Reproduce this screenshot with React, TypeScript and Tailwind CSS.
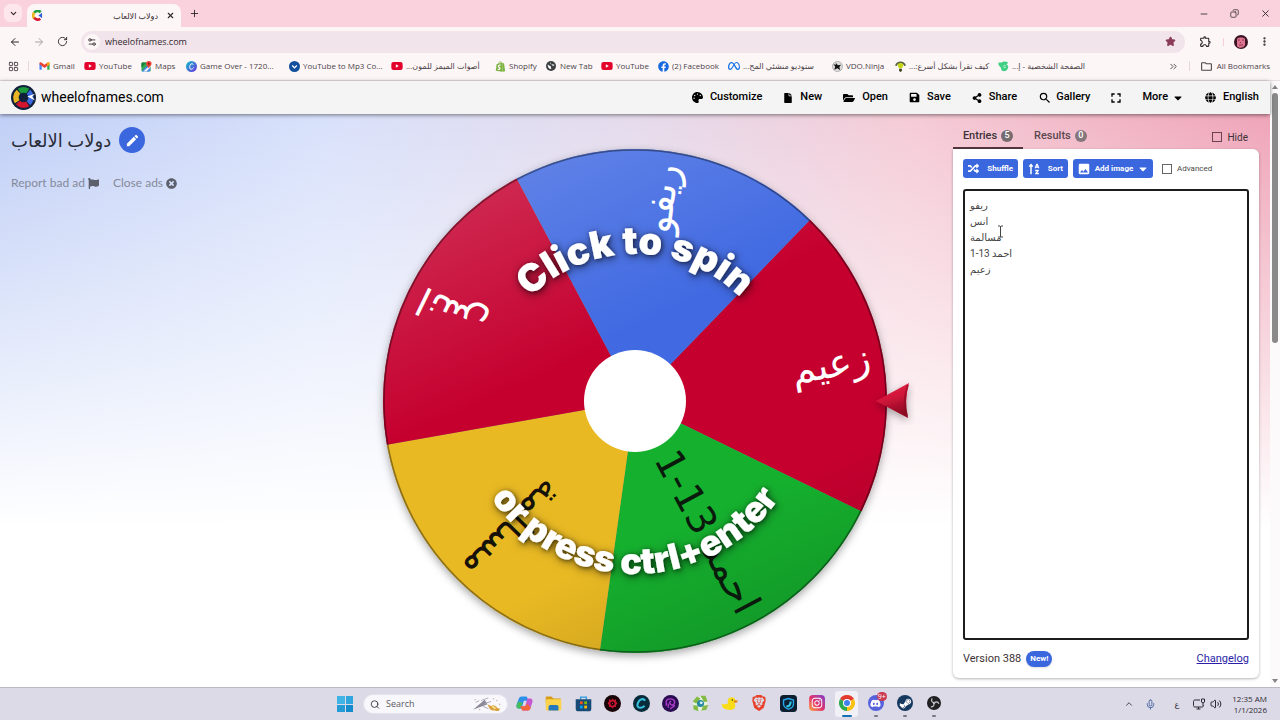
import React from 'react';
import {
  FaCaretDown, FaDiscord, FaFacebook, FaFile, FaFlag, FaFolderOpen, FaGlobe, FaInstagram, FaPalette,
  FaRandom, FaSave, FaShareAlt, FaShopify, FaSortAlphaUp, FaSteamSymbol, FaTimesCircle, FaYoutube,
} from 'react-icons/fa';
import { FaMeta } from 'react-icons/fa6';
import { MdEdit, MdFullscreen, MdImage, MdOutlineExtension, MdOutlineFolder, MdSearch } from 'react-icons/md';
import { SiBrave } from 'react-icons/si';
import {
  ArrowLeft, ArrowRight, ChevronDown, ChevronUp, ChevronsRight, Copy, EllipsisVertical, LayoutGrid,
  Mic, Minus, Plus, RotateCw, Search, Settings2, Star, Volume2, X,
} from 'lucide-react';

interface Bookmark {
  label: string;
  icon: React.ReactNode;
  width: string;
  rtl?: boolean;
}

interface Slice {
  label: string;
  start: number;
  fill: string;
  ink: string;
}

const YouTubeIcon = () => <FaYoutube className="size-3 text-[#e3002b]" />;

const GmailIcon = () => (
  <svg viewBox="0 0 24 18" className="w-[11px]">
    <path d="M1 17V3l5 4v10z" fill="#4285f4" />
    <path d="M18 17V7l5-4v14z" fill="#34a853" />
    <path d="M1 3c0-3 3-3 4-2l7 5 7-5c1-1 4-1 4 2v2l-11 8L1 5z" fill="#ea4335" />
    <path d="M18 2l1-1c1-1 4-1 4 2v2l-5 4z" fill="#fbbc04" />
  </svg>
);

const MapsIcon = () => (
  <svg viewBox="0 0 24 24" className="size-[11px]">
    <rect x="1" y="3" width="20" height="20" rx="3" fill="#34a853" />
    <path d="M2 22L20 4v17l-2 2H3z" fill="#4285f4" />
    <path d="M5 23L21 8v5l-9 10z" fill="#f4f4f4" />
    <path d="M1 6c0-2 1-3 3-3h8L1 14z" fill="#188038" />
    <path d="M17 0a6 6 0 0 1 6 6c0 4-4 5-6 10-2-5-6-6-6-10a6 6 0 0 1 6-6z" fill="#ea4335" />
    <circle cx="17" cy="6" r="2" fill="#811411" />
  </svg>
);

const CanvaIcon = () => (
  <svg viewBox="0 0 24 24" className="size-[11px]">
    <defs>
      <linearGradient id="canva" x1="0" y1="0" x2="1" y2="1">
        <stop offset="0" stopColor="#12c2c9" />
        <stop offset="1" stopColor="#6a2fe0" />
      </linearGradient>
    </defs>
    <circle cx="12" cy="12" r="12" fill="url(#canva)" />
    <path d="M16 8c-1-3-5-3-7 1s-1 9 2 9 5-2 6-4" fill="none" stroke="#fff" strokeWidth="2" />
  </svg>
);

const ConverterIcon = () => (
  <svg viewBox="0 0 24 24" className="size-[11px]">
    <circle cx="12" cy="12" r="12" fill="#11509c" />
    <path d="M7 10l5 5 5-5" fill="none" stroke="#fff" strokeWidth="3" />
  </svg>
);

const GlobeTabIcon = () => (
  <svg viewBox="0 0 24 24" className="size-[10px]">
    <circle cx="12" cy="12" r="12" fill="#3c4043" />
    <path d="M4 9c3-1 3 3 6 3s1 5 3 7c-5 1-9-4-9-10zM11 3c2 3 0 4 3 5s6-1 6 2c-2 3-5 1-6-1s-5-1-3-6z" fill="#fff" />
  </svg>
);

const NinjaIcon = () => (
  <svg viewBox="0 0 24 24" className="size-[11px]">
    <circle cx="12" cy="12" r="11" fill="#ddd" stroke="#777" />
    <path d="M8 4l5 5 7-1-4 5 2 7-6-4-7 3 2-7-4-5 6 1z" fill="#111" />
  </svg>
);

const ReaderIcon = () => (
  <svg viewBox="0 0 24 24" className="size-[11px]">
    <path d="M0 10C3-2 21-2 24 10l-4 1C18 3 6 3 4 11z" fill="#58633a" />
    <path d="M6 8c2-4 10-4 12 0 0 4-2 5-3 8H9C8 13 6 12 6 8z" fill="#c5d60f" />
    <path d="M9 17h6v5l-3 2-3-2z" fill="#3c4322" />
  </svg>
);

const LeafIcon = () => (
  <svg viewBox="0 0 24 24" className="size-[11px]">
    <path d="M1 4c4-2 5 1 9-2 4-2 8-1 12 1-1 3-3 3-3 5 3 1 4 4 3 7-2 5-6 8-11 7-5-1-3-6-6-9C3 11 0 9 1 4z" fill="#3fcf83" />
    <path d="M17 10c-4-2-6 1-5 3s4 3 5 0h-3" fill="none" stroke="#fff" strokeWidth="1" />
  </svg>
);

const bookmarks: Bookmark[] = [
  { label: 'Gmail', icon: <GmailIcon />, width: 'w-[46px]' },
  { label: 'YouTube', icon: <YouTubeIcon />, width: 'w-[56px]' },
  { label: 'Maps', icon: <MapsIcon />, width: 'w-[45px]' },
  { label: 'Game Over - 1720...', icon: <CanvaIcon />, width: 'w-[103px]' },
  { label: 'YouTube to Mp3 Co...', icon: <ConverterIcon />, width: 'w-[103px]' },
  { label: 'أصوات الميمز للمون...', icon: <YouTubeIcon />, width: 'w-[103px]', rtl: true },
  { label: 'Shopify', icon: <FaShopify className="size-[11px] text-[#7db343]" />, width: 'w-[51px]' },
  { label: 'New Tab', icon: <GlobeTabIcon />, width: 'w-[56px]' },
  { label: 'YouTube', icon: <YouTubeIcon />, width: 'w-[56px]' },
  { label: '(2) Facebook', icon: <FaFacebook className="size-[11px] text-[#1769e0]" />, width: 'w-[71px]' },
  { label: 'ستوديو منشئي المح...', icon: <FaMeta className="size-3 text-[#1474e8]" />, width: 'w-[103px]', rtl: true },
  { label: 'VDO.Ninja', icon: <NinjaIcon />, width: 'w-[63px]' },
  { label: 'كيف تقرأ بشكل أسرع:...', icon: <ReaderIcon />, width: 'w-[103px]', rtl: true },
  { label: 'الصفحة الشخصية - إ...', icon: <LeafIcon />, width: 'w-[103px]', rtl: true },
];

const entries = ['ريفو', 'انس', 'مسالمة', 'احمد 13-1', 'زعيم'];

const slices: Slice[] = [
  { label: 'زعيم', start: -46, fill: '#c5002f', ink: '#fff' },
  { label: 'احمد 13-1', start: 26, fill: '#15b02e', ink: '#0a1a0c' },
  { label: 'مسالمة', start: 98, fill: '#e9b923', ink: '#16120a' },
  { label: 'انس', start: 170, fill: '#c5002f', ink: '#fff' },
  { label: 'ريفو', start: 242, fill: '#4069e2', ink: '#fff' },
];

const RADIUS = 252;

const slicePath = (start: number) => {
  const point = (deg: number) => {
    const rad = (deg * Math.PI) / 180;
    return `${(RADIUS * Math.cos(rad)).toFixed(1)} ${(RADIUS * Math.sin(rad)).toFixed(1)}`;
  };
  return `M0 0L${point(start)}A${RADIUS} ${RADIUS} 0 0 1 ${point(start + 72)}Z`;
};

const SiteLogo: React.FC<{ className?: string }> = ({ className }) => (
  <svg viewBox="-13 -13 26 26" className={className}>
    <circle r="13" fill="#10203a" />
    <path d="M0 0L-6 -9A11 11 0 0 1 6 -9Z" fill="#1c9b3c" />
    <path d="M0 0L-9 6A11 11 0 0 1 -7 -8Z" fill="#e8b622" />
    <path d="M0 0L6 9A11 11 0 0 1 -8 7Z" fill="#d31530" />
    <path d="M0 0L7 -8A11 11 0 0 1 7 8Z" fill="#3a68dd" />
    <circle r="5" fill="#10203a" />
    <path d="M4 -1L12 -4L9 -1L12 3Z" fill="#fff" />
  </svg>
);

const TabStrip = () => (
  <div className="flex h-[27px] items-end bg-[#fad2dd]">
    <button aria-label="Search tabs" className="mb-[5px] ml-1 flex size-[18px] items-center justify-center rounded-md bg-[#fde6ec]">
      <ChevronDown className="size-[9px]" strokeWidth={3} />
    </button>
    <div className="ml-[5px] flex h-[23px] w-[154px] items-center rounded-t-lg bg-[#fdf6f7] pl-1 pr-[2px]">
      <svg viewBox="-12 -12 24 24" className="ml-px size-[11px]">
        <path d="M7 -7A9 9 0 0 0 -7 -6" fill="none" stroke="#22a142" strokeWidth="6" />
        <path d="M-7 -6A9 9 0 0 0 -7 6" fill="none" stroke="#eab71f" strokeWidth="6" />
        <path d="M-7 5A9 9 0 0 0 6 7" fill="none" stroke="#d61b30" strokeWidth="6" />
        <path d="M2 0L10 -6V6Z" fill="#2f61d6" />
      </svg>
      <span dir="rtl" className="flex-1 px-1 text-[8px]">دولاب الالعاب</span>
      <button aria-label="Close tab" className="p-1"><X className="size-[9px]" strokeWidth={3} /></button>
    </div>
    <button aria-label="New tab" className="mb-2 ml-2"><Plus className="size-[11px]" /></button>
    <div className="mb-2 ml-auto mr-[9px] flex items-center gap-[21px]">
      <button aria-label="Minimize"><Minus className="size-[10px]" /></button>
      <button aria-label="Restore"><Copy className="size-[9px] -scale-x-100" /></button>
      <button aria-label="Close"><X className="size-[11px]" /></button>
    </div>
  </div>
);

const AddressBar = () => (
  <div className="flex h-[29px] items-center bg-[#fdf6f7] pl-[9px] pr-[10px]">
    <button aria-label="Back"><ArrowLeft className="size-3" /></button>
    <button aria-label="Forward" className="ml-3 text-[#aaa1a5]"><ArrowRight className="size-3" /></button>
    <button aria-label="Reload" className="ml-3"><RotateCw className="size-[11px]" /></button>
    <div className="ml-[13px] flex h-[22px] flex-1 items-center rounded-full bg-[#f1e4ea] pl-[3px] pr-[9px]">
      <button aria-label="Site information" className="flex size-4 items-center justify-center rounded-full bg-[#fdf6f7]">
        <Settings2 className="size-[10px]" />
      </button>
      <input aria-label="Address" defaultValue="wheelofnames.com" className="ml-[5px] flex-1 bg-transparent text-[9px] text-[#33292e] outline-none" />
      <button aria-label="Edit bookmark"><Star className="size-[11px] fill-[#893b57] text-[#893b57]" /></button>
    </div>
    <button aria-label="Extensions" className="ml-[14px]"><MdOutlineExtension className="size-[13px]" /></button>
    <span className="ml-[11px] h-2 w-px bg-[#f3cfda]" />
    <button aria-label="Profile" className="ml-[10px]">
      <svg viewBox="0 0 14 14" className="size-[14px]">
        <circle cx="7" cy="7" r="7" fill="#3c1322" />
        <path d="M3 4c1-2 7-2 8 0v6c-1 3-6 4-8 1z" fill="#dd7490" />
        <path d="M4 5h2M8 5h2M6 8l1-1M5 10h4" stroke="#8b3450" />
      </svg>
    </button>
    <button aria-label="Menu" className="ml-[11px]"><EllipsisVertical className="size-[11px]" strokeWidth={3} /></button>
  </div>
);

const BookmarkBar = () => (
  <nav className="flex h-[25px] items-center border-b border-[#e9e0e3] bg-[#fdf6f7] pb-1 pl-2 pr-[10px] text-[8px] text-[#4b4347]">
    <button aria-label="Apps"><LayoutGrid className="size-[11px]" /></button>
    <span className="ml-[9px] mr-[9px] h-[10px] w-px bg-[#e6d7dc]" />
    {bookmarks.map((bookmark, i) => (
      <a key={i} href="#" className={`${bookmark.width} flex shrink-0 items-center gap-[3px] whitespace-nowrap`}>
        <span className="flex w-3 shrink-0 justify-center">{bookmark.icon}</span>
        <span dir={bookmark.rtl ? 'rtl' : 'ltr'}>{bookmark.label}</span>
      </a>
    ))}
    <button aria-label="More bookmarks" className="ml-auto"><ChevronsRight className="size-[11px]" /></button>
    <span className="ml-[10px] mr-[10px] h-[10px] w-px bg-[#e6d7dc]" />
    <a href="#" className="flex items-center gap-1 whitespace-nowrap">
      <MdOutlineFolder className="size-[13px]" />
      All Bookmarks
    </a>
  </nav>
);

const SiteHeader = () => (
  <header className="relative flex h-[33px] items-center justify-between bg-[#f4f4f4] px-[11px] text-black shadow-[0_1px_4px_rgba(0,0,0,0.5)]">
    <a href="#" className="flex items-center gap-[5px] text-[14px]">
      <SiteLogo className="size-[25px]" />
      wheelofnames.com
    </a>
    <nav className="flex items-center gap-[21px] text-[11px] font-medium">
      <button className="flex items-center gap-[7px]"><FaPalette className="size-[11px]" />Customize</button>
      <button className="flex items-center gap-[7px]"><FaFile className="size-[10px]" />New</button>
      <button className="flex items-center gap-[7px]"><FaFolderOpen className="size-3" />Open</button>
      <button className="flex items-center gap-[7px]"><FaSave className="size-[11px]" />Save</button>
      <button className="flex items-center gap-[7px]"><FaShareAlt className="size-[10px]" />Share</button>
      <button className="flex items-center gap-1"><MdSearch className="size-[14px]" />Gallery</button>
      <button aria-label="Fullscreen"><MdFullscreen className="-mx-[3px] size-4" /></button>
      <button className="flex items-center gap-1">More<FaCaretDown className="size-3" /></button>
      <button className="flex items-center gap-[7px]"><FaGlobe className="size-[11px]" />English</button>
    </nav>
  </header>
);

const TitleBlock = () => (
  <section className="pl-[11px]">
    <div className="flex h-[26px] items-center gap-2">
      <h1 dir="rtl" className="text-[18px] text-[#2a2d38]">دولاب الالعاب</h1>
      <button aria-label="Edit title" className="flex size-[26px] items-center justify-center rounded-full bg-[#3a66de] text-white">
        <MdEdit className="size-[15px]" />
      </button>
    </div>
    <div className="mt-[21px] flex items-center gap-[14px] font-['Lato'] text-[12px] text-[#858a9b]">
      <button className="flex items-center gap-[3px]">Report bad ad<FaFlag className="size-[11px] text-[#5c606c]" /></button>
      <button className="flex items-center gap-[3px]">Close ads<FaTimesCircle className="size-[11px] text-[#5c606c]" /></button>
    </div>
  </section>
);

const Wheel = () => (
  <button aria-label="Spin the wheel" className="block">
    <svg viewBox="-280 -271 560 540" className="w-[560px] font-['DejaVu_Sans',sans-serif]">
      <defs>
        <linearGradient id="shine" x1="0.250" y1="0" x2="0.700" y2="1">
          <stop offset="0" stopColor="#fff" stopOpacity="0.180" />
          <stop offset="0.400" stopColor="#fff" stopOpacity="0" />
          <stop offset="0.750" stopColor="#000" stopOpacity="0" />
          <stop offset="1" stopColor="#000" stopOpacity="0.140" />
        </linearGradient>
        <linearGradient id="pointer" x1="0" y1="0" x2="0.300" y2="1">
          <stop offset="0" stopColor="#e02545" />
          <stop offset="0.500" stopColor="#d3173b" />
          <stop offset="1" stopColor="#8f0822" />
        </linearGradient>
        <filter id="drop" x="-20%" y="-20%" width="140%" height="140%">
          <feDropShadow dx="0" dy="3" stdDeviation="4" floodOpacity="0.350" />
        </filter>
        <filter id="glow" x="-20%" y="-40%" width="140%" height="180%">
          <feDropShadow dx="1" dy="1" stdDeviation="2" floodOpacity="0.500" />
          <feDropShadow dx="1" dy="2" stdDeviation="5" floodOpacity="0.500" />
        </filter>
        <path id="upper-arc" d="M-149 2A149 149 0 0 1 149 2" />
        <path id="lower-arc" d="M-175 -2A175 175 0 0 0 175 -2" />
      </defs>
      <circle r={RADIUS} fill="#888" filter="url(#drop)" />
      {slices.map((slice) => (
        <path key={slice.label} d={slicePath(slice.start)} fill={slice.fill} />
      ))}
      <circle r={RADIUS} fill="url(#shine)" />
      <circle r={RADIUS - 1} fill="none" stroke="#000" strokeOpacity="0.400" strokeWidth="1.500" />
      {slices.map((slice) => (
        <text
          key={slice.label}
          transform={`rotate(${slice.start + 36})`}
          x="239"
          y="11"
          textAnchor="end"
          fontSize="39"
          fill={slice.ink}
        >
          {slice.label}
        </text>
      ))}
      <circle r="51" fill="#fff" />
      <g filter="url(#glow)" fill="#fff" className="font-['Inter'] font-black">
        <text fontSize="38" textAnchor="middle">
          <textPath href="#upper-arc" startOffset="50%">Click to spin</textPath>
        </text>
        <text fontSize="36" textAnchor="middle">
          <textPath href="#lower-arc" startOffset="50%">or press ctrl+enter</textPath>
        </text>
      </g>
      <g filter="url(#drop)">
        <path d="M241 0L274 -18Q269 0 273 17Z" fill="url(#pointer)" />
        <path d="M273 -16Q267 0 272 15" fill="none" stroke="#7d0a20" strokeOpacity="0.500" strokeWidth="2" />
      </g>
    </svg>
  </button>
);

const EntriesPanel = () => (
  <aside className="mr-[11px] flex w-[306px] flex-col justify-self-end pt-[10px] text-[11px] text-[#3d3237]">
    <div className="flex h-[25px] items-stretch pt-px font-medium">
      <button className="flex w-[70px] items-center justify-center gap-1 border-b-2 border-[#55363f]">
        Entries
        <span className="flex size-3 items-center justify-center rounded-full bg-[#766b6f] text-[9px] text-white">5</span>
      </button>
      <button className="ml-[11px] flex items-center gap-1 border-b-2 border-transparent text-[#5b4850]">
        Results
        <span className="flex size-3 items-center justify-center rounded-full bg-[#85777c] text-[9px] text-white">0</span>
      </button>
      <label className="ml-auto mr-[11px] flex items-center gap-[5px] text-[10px] font-normal">
        <input type="checkbox" className="size-[10px] appearance-none border border-[#6b4450]" />
        Hide
      </label>
    </div>
    <div className="flex flex-1 flex-col rounded-md rounded-tl-none bg-white px-[10px] pt-[10px] shadow-[0_1px_3px_rgba(0,0,0,0.3)]">
      <div className="flex h-[19px] items-stretch gap-[5px] text-[8px] font-bold text-white">
        <button className="flex w-[55px] items-center justify-between rounded-[3px] bg-[#3a66de] px-[5px]">
          <FaRandom className="size-[11px]" />Shuffle
        </button>
        <button className="flex w-[45px] items-center justify-between rounded-[3px] bg-[#3a66de] px-[5px]">
          <FaSortAlphaUp className="size-3" />Sort
        </button>
        <button className="flex w-[80px] items-center justify-between rounded-[3px] bg-[#3a66de] px-1">
          <MdImage className="size-[14px]" />Add image<FaCaretDown className="size-3" />
        </button>
        <label className="ml-1 flex items-center gap-[5px] font-normal text-[#4a4a4a]">
          <input type="checkbox" className="size-[10px] appearance-none border border-[#666]" />
          Advanced
        </label>
      </div>
      <div className="relative mt-[11px] flex flex-1">
        <textarea
          dir="ltr"
          aria-label="Entries"
          defaultValue={entries.join('\n')}
          className="w-full resize-none rounded-[3px] border-2 border-[#1c1c1c] px-[5px] py-[7px] font-['Roboto','DejaVu_Sans',sans-serif] text-[10px] leading-4 text-[#454545] outline-none"
        />
        {/* text cursor hovering the list */}
        <svg viewBox="0 0 7 13" className="absolute left-[34px] top-9 h-[13px] w-[7px]">
          <path d="M1 1h2l.5.5L4 1h2M3.500 1v11M1 12h5" fill="none" stroke="#444" />
        </svg>
      </div>
      <div className="flex h-[38px] items-center">
        <span>Version 388</span>
        <span className="ml-[5px] flex h-4 w-[26px] items-center justify-center rounded-full bg-[#3a66de] text-[8px] font-bold text-white shadow">New!</span>
        <a href="#" className="ml-auto text-[#2b1fa8] underline">Changelog</a>
      </div>
    </div>
  </aside>
);

const Scrollbar = () => (
  <div className="flex w-[10px] flex-col items-center bg-[#fcfafa] py-1">
    <svg viewBox="0 0 6 4" className="w-[6px]"><path d="M0 4L3 0l3 4z" fill="#858585" /></svg>
    <div className="mt-1 h-[250px] w-[6px] rounded-full bg-[#8a8a8a]" />
    <svg viewBox="0 0 6 4" className="mt-auto w-[6px]"><path d="M0 0l3 4 3-4z" fill="#858585" /></svg>
  </div>
);

const CopilotIcon = () => (
  <svg viewBox="0 0 24 24" className="size-[17px]">
    <path d="M8 2h7l3 6h-7L8 19H4c-3 0-4-3-3-6L4 5c1-2 2-3 4-3z" fill="#2d8fe8" />
    <path d="M1 14l2-5 6 2-2 8H4c-3 0-4-2-3-5z" fill="#42bd5b" />
    <path d="M16 22H9l-3-6h7l3-11h4c3 0 4 3 3 6l-3 8c-1 2-2 3-4 3z" fill="#c557cf" />
    <path d="M16 22H9l-3-6h7l3-4 5 6c-1 3-3 4-5 4z" fill="#f5663d" />
  </svg>
);

const ExplorerIcon = () => (
  <svg viewBox="0 0 24 22" className="size-[17px]">
    <path d="M1 3c0-2 1-2 2-2h6l3 3h10v6H1z" fill="#d99b14" />
    <rect x="1" y="5" width="22" height="16" rx="2" fill="#fcd34a" />
    <path d="M5 21v-5c0-2 1-3 3-3h8c2 0 3 1 3 3v5z" fill="#2577be" />
  </svg>
);

const StoreIcon = () => (
  <svg viewBox="0 0 24 24" className="size-[17px]">
    <path d="M8 6V3h8v3" fill="none" stroke="#2b9be0" strokeWidth="2" />
    <path d="M1 6h22v13c0 3-1 4-4 4H5c-3 0-4-1-4-4z" fill="#184a77" />
    <path d="M7 9h4v4H7z" fill="#f25022" />
    <path d="M13 9h4v4h-4z" fill="#7fba00" />
    <path d="M7 15h4v4H7z" fill="#00a4ef" />
    <path d="M13 15h4v4h-4z" fill="#ffb900" />
  </svg>
);

const RedAppIcon = () => (
  <svg viewBox="-12 -12 24 24" className="size-[17px]">
    <circle r="12" fill="#170508" />
    <path d="M0 -7l2 2 3-1 0 3 2 3-2 2 0 3-3 0-2 2-2-2-3 0 0-3-2-2 2-3 0-3 3 1z" fill="#c41530" />
    <circle r="2" fill="none" stroke="#170508" strokeWidth="2" />
  </svg>
);

const CyanAppIcon = () => (
  <svg viewBox="-12 -12 24 24" className="size-[17px]">
    <circle r="12" fill="#082b3a" />
    <path d="M5 -4C3 -8 -3 -6 -5 -1s0 7 3 7 5-1 6-3" fill="none" stroke="#35bfdc" strokeWidth="3" />
  </svg>
);

const PurpleAppIcon = () => (
  <svg viewBox="-12 -12 24 24" className="size-[17px]">
    <circle r="12" fill="#2a0d51" />
    <path d="M-6 3v-5c0-6 11-6 12 0 0 4-4 5-6 3s-1-4 1-4M-3 6v-6M0 8c0-3 5-2 6-6" fill="none" stroke="#ae3acb" strokeWidth="2" />
  </svg>
);

const GreenAppIcon = () => (
  <svg viewBox="-12 -12 24 24" className="size-[17px]">
    <circle r="10" fill="#e7f2df" />
    <path d="M-11 -3l6-7 5 3-6 7zM0 -11h7l3 8-5 1zM11 2l-3 7-7 1 3-7zM-3 11l-7-3v-6l6 1z" fill="#82ba44" />
    <circle r="5" fill="#2788a1" />
    <circle cx="1" cy="-1" r="2" fill="#d5f1f3" />
  </svg>
);

const DuckIcon = () => (
  <svg viewBox="0 0 24 24" className="size-[17px]">
    <path d="M1 12c3 2 6 1 9 0-1-3-1-9 5-9 5 0 7 5 4 9 3 5 0 9-6 9C5 21 1 18 1 12z" fill="#f8dc19" />
    <path d="M19 7l5 1-2 3h-4z" fill="#e98517" />
    <circle cx="16" cy="7" r="1" fill="#222" />
  </svg>
);

const ShieldIcon = () => (
  <svg viewBox="0 0 24 24" className="size-[17px]">
    <rect width="24" height="24" rx="5" fill="#0d1e30" />
    <path d="M5 7l7-2 7 2v6c0 4-4 6-7 7-3-1-7-4-7-7z" fill="none" stroke="#26a7ea" strokeWidth="2" />
    <path d="M9 16c4 0 6-2 6-7" fill="none" stroke="#35c9ef" strokeWidth="3" />
  </svg>
);

const ChromeIcon = () => (
  <svg viewBox="-12 -12 24 24" className="size-4">
    <path d="M0 0L-10.400 -6A12 12 0 0 1 10.400 -6Z" fill="#e33b2e" />
    <path d="M0 0L10.400 -6A12 12 0 0 1 0 12Z" fill="#fbc116" />
    <path d="M0 0L0 12A12 12 0 0 1 -10.400 -6Z" fill="#2da94f" />
    <circle r="6" fill="#fff" />
    <circle r="4.500" fill="#4080ee" />
  </svg>
);

const ObsIcon = () => (
  <svg viewBox="-12 -12 24 24" className="size-[14px]">
    <circle r="12" fill="#201f22" />
    <g fill="none" stroke="#c9c8cc" strokeWidth="2">
      <path d="M-3 -8C-6 -4 -3 0 1 -1" />
      <path d="M-3 -8C-6 -4 -3 0 1 -1" transform="rotate(120)" />
      <path d="M-3 -8C-6 -4 -3 0 1 -1" transform="rotate(240)" />
    </g>
  </svg>
);

const taskbarApps = [
  { name: 'Copilot', icon: <CopilotIcon /> },
  { name: 'File Explorer', icon: <ExplorerIcon /> },
  { name: 'Store', icon: <StoreIcon /> },
  { name: 'Game launcher', icon: <RedAppIcon /> },
  { name: 'Clips', icon: <CyanAppIcon /> },
  { name: 'Voice', icon: <PurpleAppIcon /> },
  { name: 'Emulator', icon: <GreenAppIcon /> },
  { name: 'Duck', icon: <DuckIcon /> },
  { name: 'Brave', icon: <SiBrave className="size-4 text-[#e8432a]" /> },
  { name: 'Shield', icon: <ShieldIcon /> },
  {
    name: 'Instagram',
    icon: (
      <span className="flex size-4 items-center justify-center rounded-[4px] bg-linear-to-tr from-[#f9a63a] via-[#df2b70] to-[#8034c9] text-white">
        <FaInstagram className="size-3" />
      </span>
    ),
  },
  { name: 'Chrome', icon: <ChromeIcon />, active: true },
  {
    name: 'Discord',
    icon: (
      <span className="relative flex size-4 items-center justify-center rounded-full bg-[#5662dc] text-white">
        <FaDiscord className="size-[11px]" />
        <span className="absolute -right-[3px] -top-[3px] flex h-[9px] w-[10px] items-center justify-center rounded-full bg-[#ca3b52] text-[7px] leading-none">9+</span>
      </span>
    ),
    open: true,
  },
  {
    name: 'Steam',
    icon: (
      <span className="flex size-4 items-center justify-center rounded-full bg-[#15395f] text-white">
        <FaSteamSymbol className="size-[13px]" />
      </span>
    ),
    open: true,
  },
  { name: 'OBS Studio', icon: <ObsIcon />, open: true },
];

const Taskbar = () => (
  <footer className="grid h-[33px] grid-cols-[1fr_auto_1fr] items-center border-t border-[#bdb9c3] bg-[#dcdae7] pl-[6px] text-[9px] text-[#2c2a33]">
    <div />
    <div className="flex items-center">
      <button aria-label="Start" className="grid size-4 grid-cols-2 gap-px">
        <span className="bg-[#40b4e5]" />
        <span className="bg-[#2fa6dd]" />
        <span className="bg-[#259bd6]" />
        <span className="bg-[#148bcb]" />
      </button>
      <label className="ml-[10px] flex h-5 w-[145px] items-center gap-[6px] rounded-full border border-[#e5e3ee] bg-[#f8f7fc] px-[6px]">
        <Search className="size-[11px]" />
        <input aria-label="Search" placeholder="Search" className="w-20 bg-transparent text-[9px] outline-none placeholder:text-[#5d5b63]" />
        <svg viewBox="0 0 32 16" className="ml-auto w-8">
          <path d="M1 14L14 3l3 5z" fill="#8b8998" />
          <path d="M10 4l8-3M14 7l7-2M12 10l6 3M4 6l4-2" stroke="#aaa4b4" />
          <path d="M17 8l4 2c3-2 5 0 7 2l3 1-2 3-4-1c-3 0-5-1-6-3z" fill="#d9a13b" />
          <path d="M22 10l4 3" stroke="#f6dc8b" strokeWidth="2" />
          <path d="M3 3h1M27 4h1M23 2h1M8 14h1M30 8h1" stroke="#a67a56" />
        </svg>
      </label>
      <div className="ml-[2px] grid w-[439px] grid-cols-[repeat(15,1fr)]">
        {taskbarApps.map((app) => (
          <button
            key={app.name}
            aria-label={app.name}
            className={`mx-[3px] flex h-[26px] flex-col items-center justify-end gap-[2px] rounded-[3px] ${app.active ? 'bg-[#f1f0f6]' : ''}`}
          >
            <span className="flex h-5 items-center">{app.icon}</span>
            <span className={`h-[2px] rounded-full ${app.active ? 'w-[10px] bg-[#1372b5]' : app.open ? 'w-1 bg-[#797784]' : 'w-1'}`} />
          </button>
        ))}
      </div>
    </div>
    <div className="flex items-center justify-end pr-[13px]">
      <button aria-label="Hidden icons"><ChevronUp className="size-[10px]" /></button>
      <button aria-label="Microphone" className="ml-[11px]"><Mic className="size-[11px] text-[#4564a3]" /></button>
      <span className="ml-[18px] text-[8px]">ع</span>
      <svg viewBox="0 0 24 24" className="ml-[14px] size-3">
        <path d="M14 4H4c-2 0-3 1-3 3v8c0 2 1 3 3 3h14c2 0 3-1 3-3M7 22h8M11 18v4M17 2h6v6c0 2-6 2-6 0zM20 10v6" fill="none" stroke="#2c2a33" strokeWidth="2" />
      </svg>
      <Volume2 className="ml-[5px] size-3" />
      <div className="ml-[10px] text-right text-[8px] leading-[11px]">
        <div>12:35 AM</div>
        <div>1/1/2026</div>
      </div>
    </div>
  </footer>
);

const App: React.FC = () => {
  return (
    <div className="flex min-h-screen flex-col overflow-x-hidden font-['Open_Sans','DejaVu_Sans',sans-serif] text-[#2f272b]">
      <TabStrip />
      <AddressBar />
      <BookmarkBar />
      <div className="flex flex-1 font-['Roboto','DejaVu_Sans',sans-serif]">
        <div className="flex flex-1 flex-col">
          <SiteHeader />
          <main className="grid flex-1 grid-cols-[1fr_auto_1fr] bg-[linear-gradient(to_bottom,transparent,white_72%),linear-gradient(to_right,#c0cff6,#d8e1fb_25%,#e5dbec_50%,#f5cbd6_72%,#efa5b9)] pb-[9px]">
            <div className="pt-[13px]"><TitleBlock /></div>
            <div className="pt-4"><Wheel /></div>
            <EntriesPanel />
          </main>
        </div>
        <Scrollbar />
      </div>
      <Taskbar />
    </div>
  );
};

export default App;
